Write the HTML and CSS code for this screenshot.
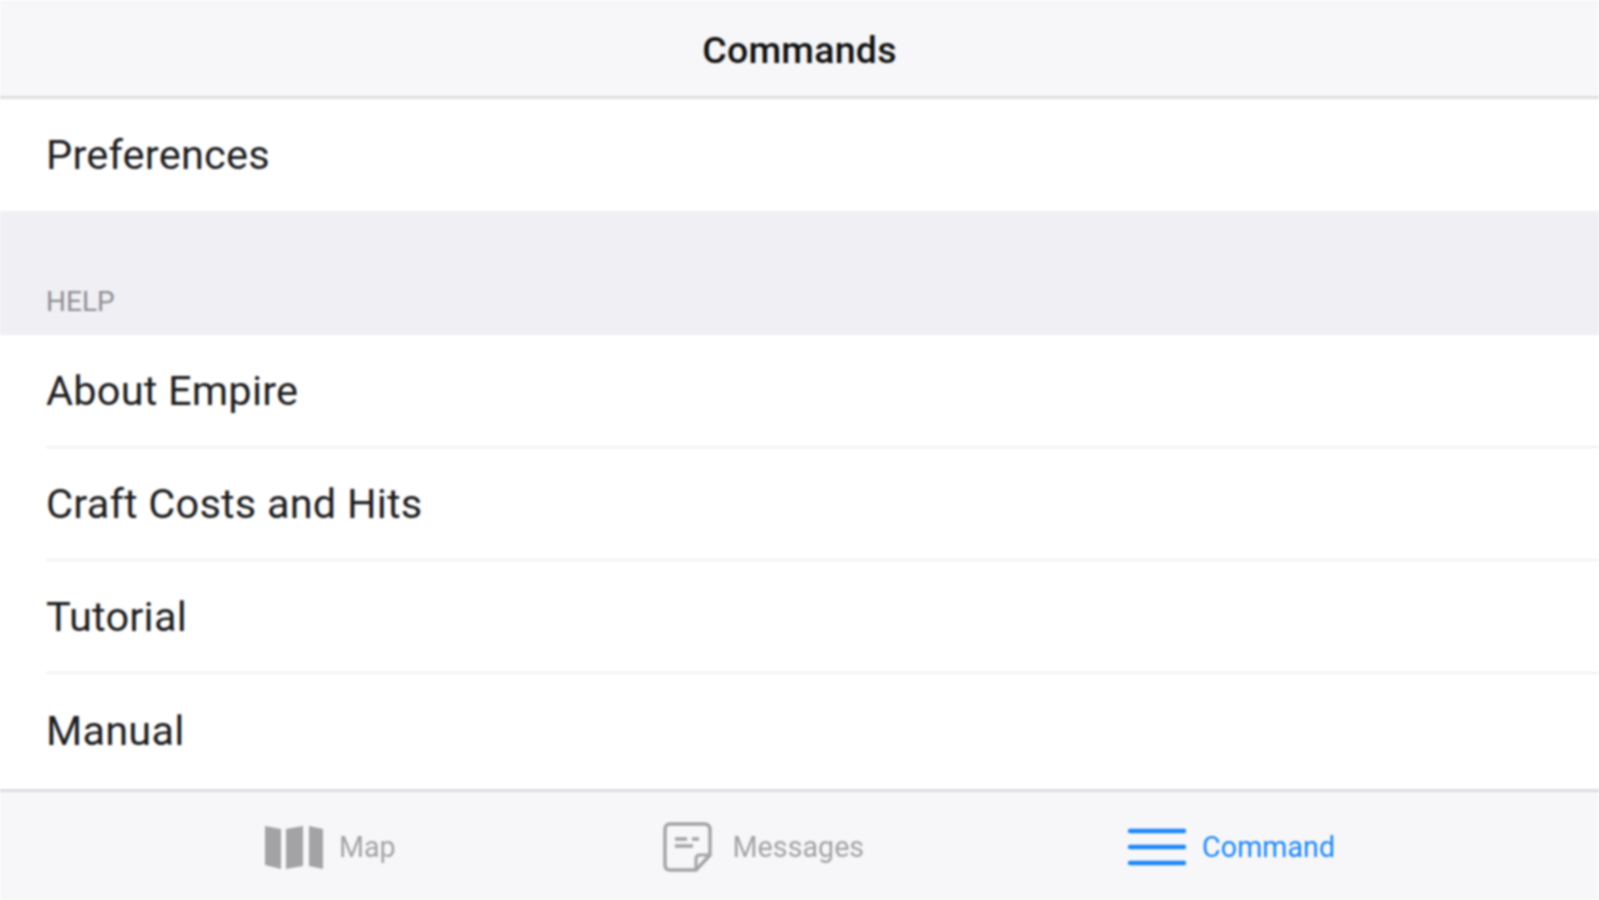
FILE: index.html
```html
<!DOCTYPE html>
<html lang="en">
<head>
<meta charset="utf-8">
<title>Commands</title>
<link rel="stylesheet" href="styles.css">
</head>
<body>
<div class="app">
  <header class="navbar"><h1 class="nav-title">Commands</h1></header>
  <main class="content">
    <ul class="group group-top">
      <li class="row"><span class="row-label">Preferences</span></li>
    </ul>
    <div class="section-head">HELP</div>
    <ul class="group">
      <li class="row"><span class="row-label">About Empire</span></li>
      <li class="row"><span class="row-label">Craft Costs and Hits</span></li>
      <li class="row"><span class="row-label">Tutorial</span></li>
      <li class="row"><span class="row-label">Manual</span></li>
    </ul>
  </main>
  <nav class="tabbar">
    <div class="tab tab-map">
      <svg class="icon icon-map" viewBox="0 0 58 45" aria-hidden="true">
        <path d="M0 1 L16 4 V44 L0 40 Z M21 4 L38 1 V41 L21 44 Z M44 1 L58 4 V44 L44 41 Z" fill="#a3a3a6"/>
      </svg>
      <span class="tab-label">Map</span>
    </div>
    <div class="tab">
      <svg class="icon icon-msg" viewBox="0 0 50 50" aria-hidden="true">
        <path d="M7 2 H41 Q47 2 47 8 V33 L33 48 H7 Q2 48 2 43 V8 Q2 2 7 2 Z" fill="none" stroke="#a3a3a6" stroke-width="3.4"/>
        <path d="M47 33 H37 Q33 33 33 37 V48" fill="none" stroke="#a3a3a6" stroke-width="3"/>
        <path d="M12 17 H24 M29 17 H36 M12 24 H30" fill="none" stroke="#a3a3a6" stroke-width="3.5"/>
      </svg>
      <span class="tab-label">Messages</span>
    </div>
    <div class="tab tab-active">
      <svg class="icon icon-cmd" viewBox="0 0 58 40" aria-hidden="true">
        <path d="M2 4 H56 M2 20 H56 M2 36 H56" fill="none" stroke="#1c86fa" stroke-width="4.4" stroke-linecap="round"/>
      </svg>
      <span class="tab-label">Command</span>
    </div>
  </nav>
</div>
</body>
</html>
```
FILE: styles.css
```css
* { box-sizing: border-box; }
html, body { margin: 0; padding: 0; height: 100%; overflow: hidden; background: #fff; }
body { font-family: Roboto, "Liberation Sans", sans-serif; }
.app { display: flex; flex-direction: column; height: 900px; filter: blur(0.8px); }
.navbar {
  height: 99px; flex: none; display: flex; align-items: center; justify-content: center;
  background: #f7f7f9; border-bottom: 3px solid #dfdfe1; padding-top: 4px;
}
.nav-title { margin: 0; font-size: 37.5px; font-weight: 500; letter-spacing: 0.25px; color: #111; }
.content { flex: 1; min-height: 0; overflow: hidden; }
.group { list-style: none; margin: 0; padding: 0; background: #fff; }
.row { height: 113px; margin-left: 46px; padding-bottom: 1px; display: flex; align-items: center; border-bottom: 2px solid #f0f0f2; }
.group .row:last-child { border-bottom: 0; }
.group-top .row { height: 112px; }
.row-label { font-size: 41.5px; letter-spacing: 0.2px; color: #1c1c1e; }
.section-head {
  height: 124px; display: flex; align-items: flex-end; padding: 0 0 17px 46px;
  background: #efeff4; color: #8e8e93; font-size: 28px;
}
.tabbar {
  height: 111px; flex: none; display: flex; align-items: center; justify-content: space-evenly;
  background: #f7f7f9; border-top: 3px solid #dcdcde; padding-top: 2px;
}
.tab { display: flex; align-items: center; gap: 16px; color: #a3a3a6; }
.tab-map { padding: 0 3px 0 1px; }
.tab-label { font-size: 28.7px; }
.tab-active { color: #1c86fa; }
.icon { display: block; flex: none; }
.icon-map { width: 58px; height: 45px; }
.icon-msg { width: 50px; height: 50px; margin-right: 4px; }
.icon-cmd { width: 58px; height: 40px; }
```
